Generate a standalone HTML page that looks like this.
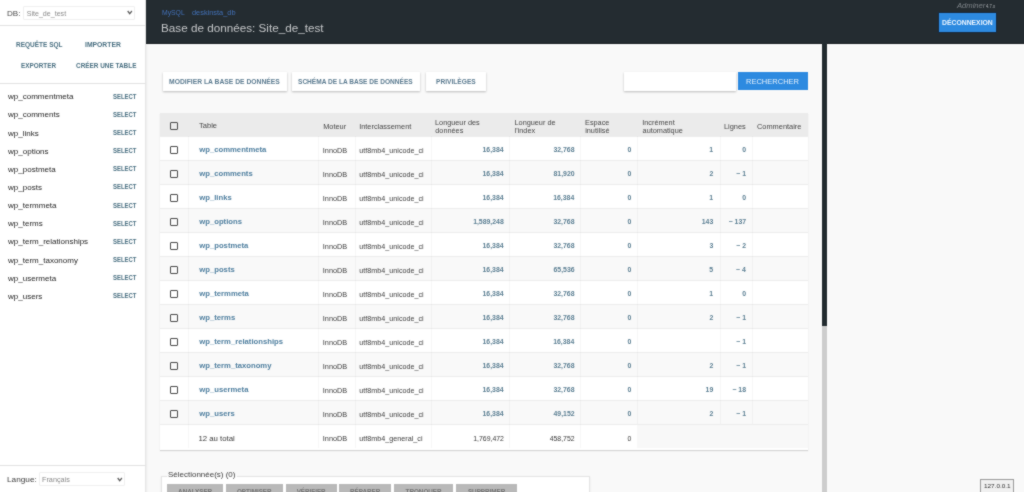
<!DOCTYPE html>
<html><head><meta charset="utf-8">
<style>
*{margin:0;padding:0;box-sizing:border-box}
html,body{width:1024px;height:492px;overflow:hidden;background:#f9f9f9;font-family:"Liberation Sans",sans-serif;position:relative}
.a{position:absolute}
.t{position:absolute;white-space:nowrap;line-height:1}
#wrap{position:absolute;left:-3px;top:-3px;width:1030px;height:498px;background:#f9f9f9;filter:url(#bl)}
#in{position:absolute;left:3px;top:3px;width:1024px;height:492px}
</style></head><body>
<svg width="0" height="0" style="position:absolute"><filter id="bl" x="0" y="0" width="100%" height="100%" color-interpolation-filters="sRGB"><feConvolveMatrix order="3" kernelMatrix="1 2 1 2 16 2 1 2 1" divisor="28" edgeMode="duplicate" preserveAlpha="true"/></filter></svg>
<div id="wrap"><div id="in">
<div class="a" style="left:-3px;top:-3px;width:149px;height:498px;background:#fff;border-right:1px solid #e6e6e6;box-shadow:1px 0 2px rgba(0,0,0,.06)"></div>
<div class="a" style="left:23px;top:6px;width:112px;height:14px;background:#fff;border:1px solid #efefef;border-radius:1px"></div>
<svg class="a" style="left:127px;top:10px" width="6" height="5" viewBox="0 0 6 5"><path d="M0.7 1 L2.7 3.6 L4.9 1" stroke="#606060" stroke-width="1.3" fill="none"/></svg>
<div class="a" style="left:-3px;top:25px;width:149px;height:1px;background:#e2e2e2"></div>
<div class="a" style="left:-3px;top:83px;width:149px;height:1px;background:#e2e2e2"></div>
<div class="a" style="left:-3px;top:465px;width:149px;height:1px;background:#e2e2e2"></div>
<div class="a" style="left:39px;top:472px;width:86px;height:14px;background:#fff;border:1px solid #efefef;border-radius:1px"></div>
<svg class="a" style="left:117px;top:476.5px" width="6" height="5" viewBox="0 0 6 5"><path d="M0.7 1 L2.7 3.6 L4.9 1" stroke="#606060" stroke-width="1.3" fill="none"/></svg>
<div class="a" style="left:146px;top:-3px;width:881px;height:46.5px;background:#242c31;box-shadow:inset 0 -1px 0 rgba(0,0,0,.25)"></div>
<div class="a" style="left:939px;top:13px;width:57px;height:19px;background:#2d8ae0;box-shadow:0 0 0 1px rgba(10,40,80,.5)"></div>
<div class="a" style="left:822px;top:43px;width:5px;height:452px;background:#cdcdcd"></div>
<div class="a" style="left:822px;top:43px;width:5px;height:283px;background:#222b2f"></div>
<div class="a" style="left:162.5px;top:72px;width:124px;height:19px;background:#fff;box-shadow:0 1px 2px rgba(0,0,0,.25)"></div>
<div class="a" style="left:292px;top:72px;width:128px;height:19px;background:#fff;box-shadow:0 1px 2px rgba(0,0,0,.25)"></div>
<div class="a" style="left:426px;top:72px;width:60px;height:19px;background:#fff;box-shadow:0 1px 2px rgba(0,0,0,.25)"></div>
<div class="a" style="left:624px;top:72px;width:112px;height:19px;background:#fff;box-shadow:0 1px 2px rgba(0,0,0,.25)"></div>
<div class="a" style="left:738px;top:72px;width:70px;height:18px;background:#2d8ae0"></div>
<div class="a" style="left:160px;top:113px;width:648px;height:337px;background:#fff;box-shadow:0 1px 1px rgba(0,0,0,.14)"></div>
<div class="a" style="left:160px;top:113px;width:648px;height:23px;background:#ebebeb"></div>
<div class="a" style="left:170px;top:121.5px;width:8px;height:8px;border:1.15px solid #4a4a4a;border-radius:1px"></div>
<div class="a" style="left:160px;top:136px;width:648px;height:24px;background:#fff;border-top:1px solid #ededed"></div>
<div class="a" style="left:170px;top:146.0px;width:8px;height:8px;border:1.15px solid #4a4a4a;border-radius:1px"></div>
<div class="a" style="left:160px;top:160px;width:648px;height:24px;background:#f9f9f9;border-top:1px solid #ededed"></div>
<div class="a" style="left:170px;top:170.0px;width:8px;height:8px;border:1.15px solid #4a4a4a;border-radius:1px"></div>
<div class="a" style="left:160px;top:184px;width:648px;height:24px;background:#fff;border-top:1px solid #ededed"></div>
<div class="a" style="left:170px;top:194.0px;width:8px;height:8px;border:1.15px solid #4a4a4a;border-radius:1px"></div>
<div class="a" style="left:160px;top:208px;width:648px;height:24px;background:#f9f9f9;border-top:1px solid #ededed"></div>
<div class="a" style="left:170px;top:218.0px;width:8px;height:8px;border:1.15px solid #4a4a4a;border-radius:1px"></div>
<div class="a" style="left:160px;top:232px;width:648px;height:24px;background:#fff;border-top:1px solid #ededed"></div>
<div class="a" style="left:170px;top:242.0px;width:8px;height:8px;border:1.15px solid #4a4a4a;border-radius:1px"></div>
<div class="a" style="left:160px;top:256px;width:648px;height:24px;background:#f9f9f9;border-top:1px solid #ededed"></div>
<div class="a" style="left:170px;top:266.0px;width:8px;height:8px;border:1.15px solid #4a4a4a;border-radius:1px"></div>
<div class="a" style="left:160px;top:280px;width:648px;height:24px;background:#fff;border-top:1px solid #ededed"></div>
<div class="a" style="left:170px;top:290.0px;width:8px;height:8px;border:1.15px solid #4a4a4a;border-radius:1px"></div>
<div class="a" style="left:160px;top:304px;width:648px;height:24px;background:#f9f9f9;border-top:1px solid #ededed"></div>
<div class="a" style="left:170px;top:314.0px;width:8px;height:8px;border:1.15px solid #4a4a4a;border-radius:1px"></div>
<div class="a" style="left:160px;top:328px;width:648px;height:24px;background:#fff;border-top:1px solid #ededed"></div>
<div class="a" style="left:170px;top:338.0px;width:8px;height:8px;border:1.15px solid #4a4a4a;border-radius:1px"></div>
<div class="a" style="left:160px;top:352px;width:648px;height:24px;background:#f9f9f9;border-top:1px solid #ededed"></div>
<div class="a" style="left:170px;top:362.0px;width:8px;height:8px;border:1.15px solid #4a4a4a;border-radius:1px"></div>
<div class="a" style="left:160px;top:376px;width:648px;height:24px;background:#fff;border-top:1px solid #ededed"></div>
<div class="a" style="left:170px;top:386.0px;width:8px;height:8px;border:1.15px solid #4a4a4a;border-radius:1px"></div>
<div class="a" style="left:160px;top:400px;width:648px;height:24px;background:#f9f9f9;border-top:1px solid #ededed"></div>
<div class="a" style="left:170px;top:410.0px;width:8px;height:8px;border:1.15px solid #4a4a4a;border-radius:1px"></div>
<div class="a" style="left:160px;top:424px;width:648px;height:24px;background:#fff;border-top:1px solid #ededed"></div>
<div class="a" style="left:637px;top:424px;width:171px;height:24px;background:#f8f8f8;border-top:1px solid #ededed"></div>
<div class="a" style="left:188px;top:136px;width:1px;height:312px;background:rgba(0,0,0,.03)"></div>
<div class="a" style="left:318px;top:136px;width:1px;height:312px;background:rgba(0,0,0,.03)"></div>
<div class="a" style="left:355px;top:136px;width:1px;height:312px;background:rgba(0,0,0,.03)"></div>
<div class="a" style="left:431px;top:136px;width:1px;height:312px;background:rgba(0,0,0,.03)"></div>
<div class="a" style="left:509px;top:136px;width:1px;height:312px;background:rgba(0,0,0,.03)"></div>
<div class="a" style="left:580px;top:136px;width:1px;height:312px;background:rgba(0,0,0,.03)"></div>
<div class="a" style="left:637px;top:136px;width:1px;height:288px;background:rgba(0,0,0,.03)"></div>
<div class="a" style="left:720px;top:136px;width:1px;height:288px;background:rgba(0,0,0,.03)"></div>
<div class="a" style="left:752px;top:136px;width:1px;height:288px;background:rgba(0,0,0,.03)"></div>
<div class="a" style="left:161px;top:476px;width:429px;height:30px;background:#fff;border:1px solid #e4e4e4;box-shadow:0 1px 2px rgba(0,0,0,.08)"></div>
<div class="a" style="left:166.5px;top:471px;width:70px;height:6px;background:#f9f9f9"></div>
<div class="a" style="left:167.0px;top:483.5px;width:56.3px;height:12px;background:#b9b9b9"></div>
<div class="a" style="left:225.5px;top:483.5px;width:57.5px;height:12px;background:#b9b9b9"></div>
<div class="a" style="left:285.7px;top:483.5px;width:50.9px;height:12px;background:#b9b9b9"></div>
<div class="a" style="left:339.2px;top:483.5px;width:52.0px;height:12px;background:#b9b9b9"></div>
<div class="a" style="left:394.0px;top:483.5px;width:59.2px;height:12px;background:#b9b9b9"></div>
<div class="a" style="left:456.0px;top:483.5px;width:61.3px;height:12px;background:#b9b9b9"></div>
<div class="a" style="left:980px;top:479px;width:34px;height:17px;background:#f0f0f0;border:1px solid #9a9a9a"></div>
<div class="t" style="top:10.00px;font-size:7.50px;color:#4a4a4a;left:7.45px;transform:scaleX(1.076);transform-origin:0 0;">DB:</div>
<div class="t" style="top:11.00px;font-size:7.10px;color:#8a8a8a;left:26.71px;">Site_de_test</div>
<div class="t" style="top:42.00px;font-size:6.90px;color:#4a7082;font-weight:bold;left:15.61px;transform:scaleX(0.941);transform-origin:0 0;">REQUÊTE SQL</div>
<div class="t" style="top:42.00px;font-size:6.90px;color:#4a7082;font-weight:bold;left:85.19px;transform:scaleX(0.986);transform-origin:0 0;">IMPORTER</div>
<div class="t" style="top:63.00px;font-size:6.90px;color:#4a7082;font-weight:bold;left:21.02px;transform:scaleX(0.924);transform-origin:0 0;">EXPORTER</div>
<div class="t" style="top:63.00px;font-size:6.90px;color:#4a7082;font-weight:bold;left:75.74px;transform:scaleX(0.930);transform-origin:0 0;">CRÉER UNE TABLE</div>
<div class="t" style="top:93.00px;font-size:8.00px;color:#262626;left:8.08px;">wp_commentmeta</div>
<div class="t" style="top:94.00px;font-size:6.50px;color:#4a7082;font-weight:bold;left:112.68px;transform:scaleX(0.914);transform-origin:0 0;">SELECT</div>
<div class="t" style="top:111.00px;font-size:8.00px;color:#262626;left:8.08px;">wp_comments</div>
<div class="t" style="top:112.00px;font-size:6.50px;color:#4a7082;font-weight:bold;left:112.68px;transform:scaleX(0.914);transform-origin:0 0;">SELECT</div>
<div class="t" style="top:130.00px;font-size:8.00px;color:#262626;left:8.08px;">wp_links</div>
<div class="t" style="top:130.00px;font-size:6.50px;color:#4a7082;font-weight:bold;left:112.68px;transform:scaleX(0.914);transform-origin:0 0;">SELECT</div>
<div class="t" style="top:148.00px;font-size:8.00px;color:#262626;left:8.08px;">wp_options</div>
<div class="t" style="top:148.00px;font-size:6.50px;color:#4a7082;font-weight:bold;left:112.68px;transform:scaleX(0.914);transform-origin:0 0;">SELECT</div>
<div class="t" style="top:166.00px;font-size:8.00px;color:#262626;left:8.08px;">wp_postmeta</div>
<div class="t" style="top:166.00px;font-size:6.50px;color:#4a7082;font-weight:bold;left:112.68px;transform:scaleX(0.914);transform-origin:0 0;">SELECT</div>
<div class="t" style="top:184.00px;font-size:8.00px;color:#262626;left:8.08px;">wp_posts</div>
<div class="t" style="top:184.00px;font-size:6.50px;color:#4a7082;font-weight:bold;left:112.68px;transform:scaleX(0.914);transform-origin:0 0;">SELECT</div>
<div class="t" style="top:202.00px;font-size:8.00px;color:#262626;left:8.08px;">wp_termmeta</div>
<div class="t" style="top:203.00px;font-size:6.50px;color:#4a7082;font-weight:bold;left:112.68px;transform:scaleX(0.914);transform-origin:0 0;">SELECT</div>
<div class="t" style="top:220.00px;font-size:8.00px;color:#262626;left:8.08px;">wp_terms</div>
<div class="t" style="top:221.00px;font-size:6.50px;color:#4a7082;font-weight:bold;left:112.68px;transform:scaleX(0.914);transform-origin:0 0;">SELECT</div>
<div class="t" style="top:238.00px;font-size:8.00px;color:#262626;left:8.08px;">wp_term_relationships</div>
<div class="t" style="top:239.00px;font-size:6.50px;color:#4a7082;font-weight:bold;left:112.68px;transform:scaleX(0.914);transform-origin:0 0;">SELECT</div>
<div class="t" style="top:257.00px;font-size:8.00px;color:#262626;left:8.08px;">wp_term_taxonomy</div>
<div class="t" style="top:257.00px;font-size:6.50px;color:#4a7082;font-weight:bold;left:112.68px;transform:scaleX(0.914);transform-origin:0 0;">SELECT</div>
<div class="t" style="top:275.00px;font-size:8.00px;color:#262626;left:8.08px;">wp_usermeta</div>
<div class="t" style="top:275.00px;font-size:6.50px;color:#4a7082;font-weight:bold;left:112.68px;transform:scaleX(0.914);transform-origin:0 0;">SELECT</div>
<div class="t" style="top:293.00px;font-size:8.00px;color:#262626;left:8.08px;">wp_users</div>
<div class="t" style="top:293.00px;font-size:6.50px;color:#4a7082;font-weight:bold;left:112.68px;transform:scaleX(0.914);transform-origin:0 0;">SELECT</div>
<div class="t" style="top:476.00px;font-size:7.80px;color:#3c3c3c;left:7.14px;transform:scaleX(1.056);transform-origin:0 0;">Langue:</div>
<div class="t" style="top:476.00px;font-size:7.00px;color:#888888;left:42.42px;transform:scaleX(1.036);transform-origin:0 0;">Français</div>
<div class="t" style="top:10.00px;font-size:6.90px;color:#4271b8;left:161.95px;transform:scaleX(0.988);transform-origin:0 0;">MySQL</div>
<div class="t" style="top:9.00px;font-size:7.30px;color:#4271b8;left:192.40px;transform:scaleX(1.013);transform-origin:0 0;">deskinsta_db</div>
<div class="t" style="top:22.00px;font-size:11.70px;color:#c4c6c8;left:161.06px;">Base de données: Site_de_test</div>
<div class="t" style="top:2.00px;font-size:7.20px;color:#7d8388;font-style:italic;left:957.26px;transform:scaleX(1.059);transform-origin:0 0;font-family:"Liberation Serif",serif;">Adminer</div>
<div class="t" style="top:4.00px;font-size:5.00px;color:#b0b4b8;left:985.92px;transform:scaleX(0.842);transform-origin:0 0;">4.7.x</div>
<div class="t" style="top:20.00px;font-size:6.90px;color:#eef6ff;font-weight:bold;left:942.09px;transform:scaleX(0.990);transform-origin:0 0;">DÉCONNEXION</div>
<div class="t" style="top:79.00px;font-size:6.90px;color:#5b7b90;font-weight:bold;left:168.59px;transform:scaleX(0.980);transform-origin:0 0;">MODIFIER LA BASE DE DONNÉES</div>
<div class="t" style="top:79.00px;font-size:6.90px;color:#5b7b90;font-weight:bold;left:298.17px;transform:scaleX(0.952);transform-origin:0 0;">SCHÉMA DE LA BASE DE DONNÉES</div>
<div class="t" style="top:79.00px;font-size:6.90px;color:#5b7b90;font-weight:bold;left:436.00px;transform:scaleX(0.960);transform-origin:0 0;">PRIVILÈGES</div>
<div class="t" style="top:78.00px;font-size:7.40px;color:#e6f1fb;left:746.20px;transform:scaleX(1.017);transform-origin:0 0;">RECHERCHER</div>
<div class="t" style="top:122.00px;font-size:7.50px;color:#464646;left:199.05px;">Table</div>
<div class="t" style="top:123.00px;font-size:7.40px;color:#464646;left:323.16px;">Moteur</div>
<div class="t" style="top:123.00px;font-size:7.40px;color:#464646;left:359.13px;">Interclassement</div>
<div class="t" style="top:123.00px;font-size:7.40px;color:#464646;right:278.28px;">Lignes</div>
<div class="t" style="top:123.00px;font-size:7.40px;color:#464646;left:757.03px;">Commentaire</div>
<div class="t" style="top:119.00px;font-size:7.30px;color:#464646;left:435.02px;">Longueur des</div>
<div class="t" style="top:127.00px;font-size:7.30px;color:#464646;left:435.31px;">données</div>
<div class="t" style="top:119.00px;font-size:7.30px;color:#464646;left:514.52px;">Longueur de</div>
<div class="t" style="top:127.00px;font-size:7.30px;color:#464646;left:514.66px;">l'index</div>
<div class="t" style="top:119.00px;font-size:7.30px;color:#464646;left:585.02px;">Espace</div>
<div class="t" style="top:127.00px;font-size:7.30px;color:#464646;left:585.16px;">inutilisé</div>
<div class="t" style="top:119.00px;font-size:7.30px;color:#464646;left:642.24px;">Incrément</div>
<div class="t" style="top:127.00px;font-size:7.30px;color:#464646;left:642.61px;">automatique</div>
<div class="t" style="top:146.00px;font-size:7.70px;color:#4f7f9f;font-weight:bold;left:199.28px;">wp_commentmeta</div>
<div class="t" style="top:147.00px;font-size:7.30px;color:#404040;left:322.84px;">InnoDB</div>
<div class="t" style="top:147.00px;font-size:7.20px;color:#404040;left:359.37px;">utf8mb4_unicode_ci</div>
<div class="t" style="top:147.00px;font-size:6.90px;color:#5a7e92;font-weight:bold;right:520.43px;">16,384</div>
<div class="t" style="top:147.00px;font-size:6.90px;color:#5a7e92;font-weight:bold;right:449.52px;">32,768</div>
<div class="t" style="top:147.00px;font-size:6.90px;color:#5a7e92;font-weight:bold;right:392.55px;">0</div>
<div class="t" style="top:147.00px;font-size:6.90px;color:#5a7e92;font-weight:bold;right:310.82px;">1</div>
<div class="t" style="top:147.00px;font-size:6.90px;color:#5a7e92;font-weight:bold;right:277.95px;">0</div>
<div class="t" style="top:170.00px;font-size:7.70px;color:#4f7f9f;font-weight:bold;left:199.28px;">wp_comments</div>
<div class="t" style="top:171.00px;font-size:7.30px;color:#404040;left:322.84px;">InnoDB</div>
<div class="t" style="top:171.00px;font-size:7.20px;color:#404040;left:359.37px;">utf8mb4_unicode_ci</div>
<div class="t" style="top:171.00px;font-size:6.90px;color:#5a7e92;font-weight:bold;right:520.43px;">16,384</div>
<div class="t" style="top:171.00px;font-size:6.90px;color:#5a7e92;font-weight:bold;right:449.45px;">81,920</div>
<div class="t" style="top:171.00px;font-size:6.90px;color:#5a7e92;font-weight:bold;right:392.55px;">0</div>
<div class="t" style="top:171.00px;font-size:6.90px;color:#5a7e92;font-weight:bold;right:310.75px;">2</div>
<div class="t" style="top:171.00px;font-size:6.90px;color:#5a7e92;font-weight:bold;right:278.02px;">~ 1</div>
<div class="t" style="top:194.00px;font-size:7.70px;color:#4f7f9f;font-weight:bold;left:199.28px;">wp_links</div>
<div class="t" style="top:195.00px;font-size:7.30px;color:#404040;left:322.84px;">InnoDB</div>
<div class="t" style="top:195.00px;font-size:7.20px;color:#404040;left:359.37px;">utf8mb4_unicode_ci</div>
<div class="t" style="top:195.00px;font-size:6.90px;color:#5a7e92;font-weight:bold;right:520.43px;">16,384</div>
<div class="t" style="top:195.00px;font-size:6.90px;color:#5a7e92;font-weight:bold;right:449.73px;">16,384</div>
<div class="t" style="top:195.00px;font-size:6.90px;color:#5a7e92;font-weight:bold;right:392.55px;">0</div>
<div class="t" style="top:195.00px;font-size:6.90px;color:#5a7e92;font-weight:bold;right:310.82px;">1</div>
<div class="t" style="top:195.00px;font-size:6.90px;color:#5a7e92;font-weight:bold;right:277.95px;">0</div>
<div class="t" style="top:218.00px;font-size:7.70px;color:#4f7f9f;font-weight:bold;left:199.28px;">wp_options</div>
<div class="t" style="top:219.00px;font-size:7.30px;color:#404040;left:322.84px;">InnoDB</div>
<div class="t" style="top:219.00px;font-size:7.20px;color:#404040;left:359.37px;">utf8mb4_unicode_ci</div>
<div class="t" style="top:219.00px;font-size:6.90px;color:#5a7e92;font-weight:bold;right:520.22px;">1,589,248</div>
<div class="t" style="top:219.00px;font-size:6.90px;color:#5a7e92;font-weight:bold;right:449.52px;">32,768</div>
<div class="t" style="top:219.00px;font-size:6.90px;color:#5a7e92;font-weight:bold;right:392.55px;">0</div>
<div class="t" style="top:219.00px;font-size:6.90px;color:#5a7e92;font-weight:bold;right:310.75px;">143</div>
<div class="t" style="top:219.00px;font-size:6.90px;color:#5a7e92;font-weight:bold;right:277.95px;">~ 137</div>
<div class="t" style="top:242.00px;font-size:7.70px;color:#4f7f9f;font-weight:bold;left:199.28px;">wp_postmeta</div>
<div class="t" style="top:243.00px;font-size:7.30px;color:#404040;left:322.84px;">InnoDB</div>
<div class="t" style="top:243.00px;font-size:7.20px;color:#404040;left:359.37px;">utf8mb4_unicode_ci</div>
<div class="t" style="top:243.00px;font-size:6.90px;color:#5a7e92;font-weight:bold;right:520.43px;">16,384</div>
<div class="t" style="top:243.00px;font-size:6.90px;color:#5a7e92;font-weight:bold;right:449.52px;">32,768</div>
<div class="t" style="top:243.00px;font-size:6.90px;color:#5a7e92;font-weight:bold;right:392.55px;">0</div>
<div class="t" style="top:243.00px;font-size:6.90px;color:#5a7e92;font-weight:bold;right:310.75px;">3</div>
<div class="t" style="top:243.00px;font-size:6.90px;color:#5a7e92;font-weight:bold;right:277.95px;">~ 2</div>
<div class="t" style="top:266.00px;font-size:7.70px;color:#4f7f9f;font-weight:bold;left:199.28px;">wp_posts</div>
<div class="t" style="top:267.00px;font-size:7.30px;color:#404040;left:322.84px;">InnoDB</div>
<div class="t" style="top:267.00px;font-size:7.20px;color:#404040;left:359.37px;">utf8mb4_unicode_ci</div>
<div class="t" style="top:267.00px;font-size:6.90px;color:#5a7e92;font-weight:bold;right:520.43px;">16,384</div>
<div class="t" style="top:267.00px;font-size:6.90px;color:#5a7e92;font-weight:bold;right:449.45px;">65,536</div>
<div class="t" style="top:267.00px;font-size:6.90px;color:#5a7e92;font-weight:bold;right:392.55px;">0</div>
<div class="t" style="top:267.00px;font-size:6.90px;color:#5a7e92;font-weight:bold;right:310.82px;">5</div>
<div class="t" style="top:267.00px;font-size:6.90px;color:#5a7e92;font-weight:bold;right:278.23px;">~ 4</div>
<div class="t" style="top:290.00px;font-size:7.70px;color:#4f7f9f;font-weight:bold;left:199.28px;">wp_termmeta</div>
<div class="t" style="top:291.00px;font-size:7.30px;color:#404040;left:322.84px;">InnoDB</div>
<div class="t" style="top:291.00px;font-size:7.20px;color:#404040;left:359.37px;">utf8mb4_unicode_ci</div>
<div class="t" style="top:291.00px;font-size:6.90px;color:#5a7e92;font-weight:bold;right:520.43px;">16,384</div>
<div class="t" style="top:291.00px;font-size:6.90px;color:#5a7e92;font-weight:bold;right:449.52px;">32,768</div>
<div class="t" style="top:291.00px;font-size:6.90px;color:#5a7e92;font-weight:bold;right:392.55px;">0</div>
<div class="t" style="top:291.00px;font-size:6.90px;color:#5a7e92;font-weight:bold;right:310.82px;">1</div>
<div class="t" style="top:291.00px;font-size:6.90px;color:#5a7e92;font-weight:bold;right:277.95px;">0</div>
<div class="t" style="top:314.00px;font-size:7.70px;color:#4f7f9f;font-weight:bold;left:199.28px;">wp_terms</div>
<div class="t" style="top:315.00px;font-size:7.30px;color:#404040;left:322.84px;">InnoDB</div>
<div class="t" style="top:315.00px;font-size:7.20px;color:#404040;left:359.37px;">utf8mb4_unicode_ci</div>
<div class="t" style="top:315.00px;font-size:6.90px;color:#5a7e92;font-weight:bold;right:520.43px;">16,384</div>
<div class="t" style="top:315.00px;font-size:6.90px;color:#5a7e92;font-weight:bold;right:449.52px;">32,768</div>
<div class="t" style="top:315.00px;font-size:6.90px;color:#5a7e92;font-weight:bold;right:392.55px;">0</div>
<div class="t" style="top:315.00px;font-size:6.90px;color:#5a7e92;font-weight:bold;right:310.75px;">2</div>
<div class="t" style="top:315.00px;font-size:6.90px;color:#5a7e92;font-weight:bold;right:278.02px;">~ 1</div>
<div class="t" style="top:338.00px;font-size:7.70px;color:#4f7f9f;font-weight:bold;left:199.28px;">wp_term_relationships</div>
<div class="t" style="top:339.00px;font-size:7.30px;color:#404040;left:322.84px;">InnoDB</div>
<div class="t" style="top:339.00px;font-size:7.20px;color:#404040;left:359.37px;">utf8mb4_unicode_ci</div>
<div class="t" style="top:339.00px;font-size:6.90px;color:#5a7e92;font-weight:bold;right:520.43px;">16,384</div>
<div class="t" style="top:339.00px;font-size:6.90px;color:#5a7e92;font-weight:bold;right:449.73px;">16,384</div>
<div class="t" style="top:339.00px;font-size:6.90px;color:#5a7e92;font-weight:bold;right:392.55px;">0</div>
<div class="t" style="top:339.00px;font-size:6.90px;color:#5a7e92;font-weight:bold;right:278.02px;">~ 1</div>
<div class="t" style="top:362.00px;font-size:7.70px;color:#4f7f9f;font-weight:bold;left:199.28px;">wp_term_taxonomy</div>
<div class="t" style="top:363.00px;font-size:7.30px;color:#404040;left:322.84px;">InnoDB</div>
<div class="t" style="top:363.00px;font-size:7.20px;color:#404040;left:359.37px;">utf8mb4_unicode_ci</div>
<div class="t" style="top:363.00px;font-size:6.90px;color:#5a7e92;font-weight:bold;right:520.43px;">16,384</div>
<div class="t" style="top:363.00px;font-size:6.90px;color:#5a7e92;font-weight:bold;right:449.52px;">32,768</div>
<div class="t" style="top:363.00px;font-size:6.90px;color:#5a7e92;font-weight:bold;right:392.55px;">0</div>
<div class="t" style="top:363.00px;font-size:6.90px;color:#5a7e92;font-weight:bold;right:310.75px;">2</div>
<div class="t" style="top:363.00px;font-size:6.90px;color:#5a7e92;font-weight:bold;right:278.02px;">~ 1</div>
<div class="t" style="top:386.00px;font-size:7.70px;color:#4f7f9f;font-weight:bold;left:199.28px;">wp_usermeta</div>
<div class="t" style="top:387.00px;font-size:7.30px;color:#404040;left:322.84px;">InnoDB</div>
<div class="t" style="top:387.00px;font-size:7.20px;color:#404040;left:359.37px;">utf8mb4_unicode_ci</div>
<div class="t" style="top:387.00px;font-size:6.90px;color:#5a7e92;font-weight:bold;right:520.43px;">16,384</div>
<div class="t" style="top:387.00px;font-size:6.90px;color:#5a7e92;font-weight:bold;right:449.52px;">32,768</div>
<div class="t" style="top:387.00px;font-size:6.90px;color:#5a7e92;font-weight:bold;right:392.55px;">0</div>
<div class="t" style="top:387.00px;font-size:6.90px;color:#5a7e92;font-weight:bold;right:310.75px;">19</div>
<div class="t" style="top:387.00px;font-size:6.90px;color:#5a7e92;font-weight:bold;right:278.02px;">~ 18</div>
<div class="t" style="top:410.00px;font-size:7.70px;color:#4f7f9f;font-weight:bold;left:199.28px;">wp_users</div>
<div class="t" style="top:411.00px;font-size:7.30px;color:#404040;left:322.84px;">InnoDB</div>
<div class="t" style="top:411.00px;font-size:7.20px;color:#404040;left:359.37px;">utf8mb4_unicode_ci</div>
<div class="t" style="top:411.00px;font-size:6.90px;color:#5a7e92;font-weight:bold;right:520.43px;">16,384</div>
<div class="t" style="top:411.00px;font-size:6.90px;color:#5a7e92;font-weight:bold;right:449.45px;">49,152</div>
<div class="t" style="top:411.00px;font-size:6.90px;color:#5a7e92;font-weight:bold;right:392.55px;">0</div>
<div class="t" style="top:411.00px;font-size:6.90px;color:#5a7e92;font-weight:bold;right:310.75px;">2</div>
<div class="t" style="top:411.00px;font-size:6.90px;color:#5a7e92;font-weight:bold;right:278.02px;">~ 1</div>
<div class="t" style="top:435.00px;font-size:7.80px;color:#3a3a3a;left:198.45px;">12 au total</div>
<div class="t" style="top:435.00px;font-size:7.30px;color:#3a3a3a;left:322.84px;">InnoDB</div>
<div class="t" style="top:435.00px;font-size:7.20px;color:#3a3a3a;left:359.37px;">utf8mb4_general_ci</div>
<div class="t" style="top:436.00px;font-size:6.90px;color:#3a3a3a;right:520.08px;">1,769,472</div>
<div class="t" style="top:436.00px;font-size:6.90px;color:#3a3a3a;right:449.38px;">458,752</div>
<div class="t" style="top:436.00px;font-size:6.90px;color:#3a3a3a;right:392.55px;">0</div>
<div class="t" style="top:471.00px;font-size:7.90px;color:#444;left:167.58px;transform:scaleX(1.012);transform-origin:0 0;">Sélectionnée(s) (0)</div>
<div class="t" style="top:489.00px;font-size:6.30px;color:#747474;font-weight:bold;left:195.15px;width:0;display:flex;justify-content:center;">ANALYSER</div>
<div class="t" style="top:489.00px;font-size:6.30px;color:#747474;font-weight:bold;left:254.25px;width:0;display:flex;justify-content:center;">OPTIMISER</div>
<div class="t" style="top:489.00px;font-size:6.30px;color:#747474;font-weight:bold;left:311.15px;width:0;display:flex;justify-content:center;">VÉRIFIER</div>
<div class="t" style="top:489.00px;font-size:6.30px;color:#747474;font-weight:bold;left:365.20px;width:0;display:flex;justify-content:center;">RÉPARER</div>
<div class="t" style="top:489.00px;font-size:6.30px;color:#747474;font-weight:bold;left:423.60px;width:0;display:flex;justify-content:center;">TRONQUER</div>
<div class="t" style="top:489.00px;font-size:6.30px;color:#747474;font-weight:bold;left:486.65px;width:0;display:flex;justify-content:center;">SUPPRIMER</div>
<div class="t" style="top:483.00px;font-size:6.20px;color:#333;left:983.95px;transform:scaleX(1.034);transform-origin:0 0;">127.0.0.1</div>
</div></div></body></html>
